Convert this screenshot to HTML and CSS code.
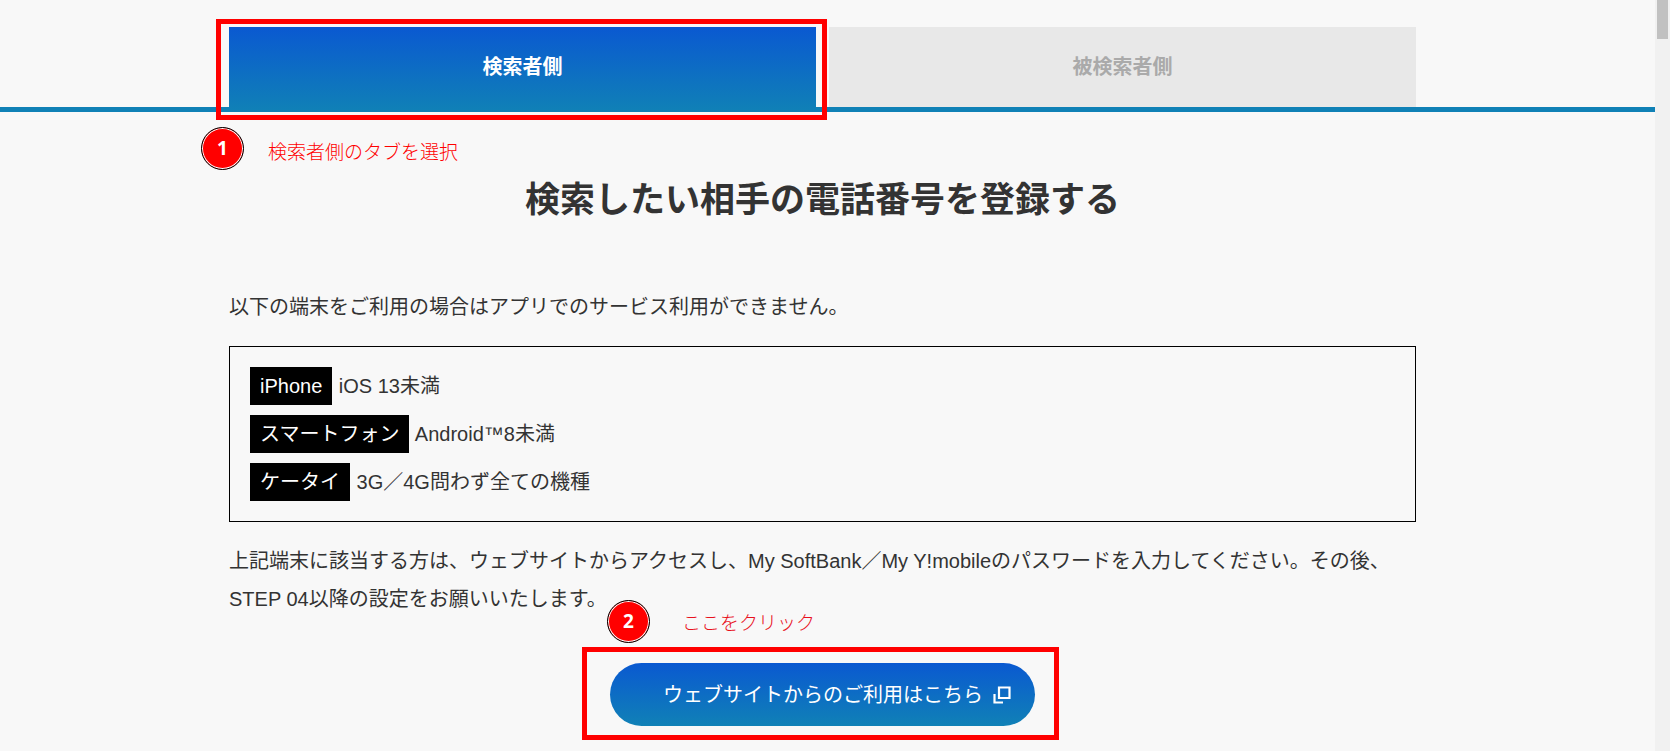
FILE: index.html
```
<!DOCTYPE html>
<html lang="ja">
  <head>
    <meta charset="UTF-8" />
    <meta name="viewport" content="width=device-width, initial-scale=1.0" />
    <title>検索したい相手の電話番号を登録する</title>
    <link rel="stylesheet" href="styles.css">
  </head>
  <body>
    <div class="page">
      <div class="tab-bar">
        <div class="container tabs" role="tablist">
          <div class="tab-item">
            <button class="tab active" type="button" role="tab" aria-selected="true">検索者側</button>
            <div class="frame tab-frame"></div>
            <div class="note tab-note">
              <span class="note-number">1</span>
              <span class="note-text">検索者側のタブを選択</span>
            </div>
          </div>
          <div class="tab-item">
            <button class="tab" type="button" role="tab" aria-selected="false">被検索者側</button>
          </div>
        </div>
      </div>

      <main class="content">
        <div class="container">
          <h2>検索したい相手の電話番号を登録する</h2>

          <p>以下の端末をご利用の場合はアプリでのサービス利用ができません。</p>
          <ul class="device-list">
            <li><span class="label">iPhone</span> iOS 13未満</li>
            <li><span class="label">スマートフォン</span> Android™8未満</li>
            <li><span class="label">ケータイ</span> 3G／4G問わず全ての機種</li>
          </ul>
          <p>上記端末に該当する方は、ウェブサイトからアクセスし、My SoftBank／My Y!mobileのパスワードを入力してください。その後、STEP 04以降の設定をお願いいたします。</p>

          <div class="link-area">
            <a class="link-button" href="#">
              ウェブサイトからのご利用はこちら
              <svg class="icon" viewBox="0 0 18 18" width="18" height="18" aria-hidden="true">
                <path d="M6 1.5h10.5V12H6z M1.5 8v8.5H10" fill="none" stroke="#fff" stroke-width="2.2" />
              </svg>
            </a>
            <div class="frame link-frame"></div>
            <div class="note link-note">
              <span class="note-number">2</span>
              <span class="note-text">ここをクリック</span>
            </div>
          </div>
        </div>
      </main>
    </div>

    <div class="scrollbar"><div class="thumb"></div></div>
  </body>
</html>
```
FILE: styles.css
```
* {
  box-sizing: border-box;
}
body {
  display: flex;
  min-height: 100vh;
  margin: 0;
  background-color: #f8f8f8;
  color: #333;
  font-family: "Liberation Sans", "Noto Sans CJK JP", sans-serif;
  font-size: 20px;
  line-height: 38px;
}
.page {
  flex: 1;
  min-width: 0;
  padding-top: 27px;
}
.container {
  width: calc(100% - 40px);
  max-width: 1187px;
  margin: 0 auto;
}

/* tabs */
.tab-bar {
  padding-right: 10px;
  background: linear-gradient(#1081b6, #1081b6) bottom / 100% 5px no-repeat;
}
.tabs {
  display: flex;
  gap: 13px;
}
.tab-item {
  flex: 1;
  position: relative;
}
.tab {
  display: block;
  width: 100%;
  height: 80px;
  padding: 0 0 3px;
  border: none;
  background-color: #e8e8e8;
  color: #aaa;
  font-family: inherit;
  font-size: 20px;
  font-weight: bold;
  cursor: pointer;
}
.tab.active {
  height: 85px;
  padding-bottom: 8px;
  background: linear-gradient(#0a59d1, #1081b6);
  color: #fff;
}

/* text */
.content {
  padding-right: 10px;
}
h2 {
  margin: 0;
  padding: 63px 0 64px;
  font-size: 35px;
  line-height: 49px;
  text-align: center;
}
p {
  margin: 0;
}
.device-list {
  display: flex;
  flex-direction: column;
  gap: 10px;
  margin: 20px 0;
  padding: 20px;
  border: 1px solid #000;
  list-style: none;
}
.label {
  display: inline-block;
  margin-right: 1px;
  padding: 0 10px;
  background-color: #000;
  color: #fff;
}

/* link button */
.link-area {
  position: relative;
  width: 425px;
  max-width: 100%;
  margin: 45px auto 20px;
}
.link-button {
  display: flex;
  align-items: center;
  justify-content: flex-end;
  gap: 10px;
  min-height: 63px;
  padding: 0 24px;
  border-radius: 32px;
  background: linear-gradient(#0a59d1, #1081b6);
  color: #fff;
  text-decoration: none;
}
.icon {
  flex: none;
}

/* red frames and numbered notes */
.frame {
  position: absolute;
  border: 5px solid #f00;
  pointer-events: none;
}
.tab-frame {
  inset: -8px -11px -8px -13px;
}
.link-frame {
  inset: -16px -24px -14px -28px;
}
.note {
  position: absolute;
  display: flex;
  align-items: center;
  gap: 24px;
  color: #f00;
  font-size: 19px;
  white-space: nowrap;
}
.tab-note {
  top: 100px;
  left: -28px;
  align-items: flex-end;
}
.link-note {
  top: -63px;
  left: -3px;
  gap: 32px;
  color: #e8101c;
}
.note-number {
  width: 43px;
  height: 43px;
  border: 1px solid #000;
  border-radius: 50%;
  background-color: #f00;
  box-shadow: inset 0 0 0 1px #fff;
  color: #fff;
  font-family: "Noto Sans", sans-serif;
  font-weight: bold;
  line-height: 41px;
  text-align: center;
}
.note-text {
  font-family: "Noto Sans CJK JP", sans-serif;
  font-weight: 300;
}

.scrollbar {
  width: 15px;
  padding: 0 2px;
  background-color: #f1f1f1;
}
.thumb {
  height: 39px;
  background-color: #c1c1c1;
}
```
